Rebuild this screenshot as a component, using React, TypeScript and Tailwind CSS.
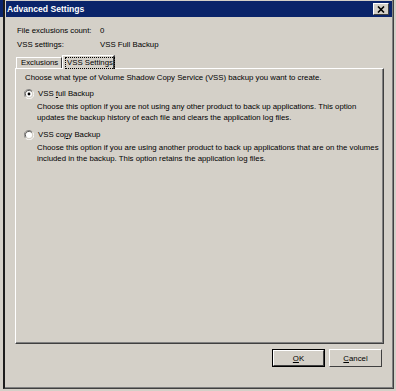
import React from "react";

const font = { fontFamily: '"Liberation Sans", Arial, sans-serif' };

function Radio({ checked }: { checked?: boolean }) {
  return (
    <svg width="10" height="10" viewBox="0 0 12 12" className="shrink-0">
      <path d="M10 2.5 A5 5 0 0 0 1.5 9.5" fill="none" stroke="#808080" strokeWidth="1" />
      <path d="M9.2 3.2 A4 4 0 0 0 2.6 8.6" fill="none" stroke="#404040" strokeWidth="1" />
      <path d="M2 9.8 A5 5 0 0 0 10.4 2.6" fill="none" stroke="#ffffff" strokeWidth="1" />
      <circle cx="6" cy="6" r="3.6" fill="#ffffff" />
      {checked ? <circle cx="6" cy="6" r="1.7" fill="#000000" /> : null}
    </svg>
  );
}

function Option({
  label,
  accel,
  rest,
  lines,
  checked,
}: {
  label: string;
  accel: string;
  rest: string;
  lines: string[];
  checked?: boolean;
}) {
  return (
    <div className="flex flex-col">
      <div className="flex items-center gap-[4px] pl-[8px] h-[12px]">
        <Radio checked={checked} />
        <span className="leading-[12px]">
          {label}
          <span className="underline">{accel}</span>
          {rest}
        </span>
      </div>
      <div className="pl-[21px] pt-[1px] leading-[11px] whitespace-nowrap">
        {lines.map((l) => (
          <div key={l}>{l}</div>
        ))}
      </div>
    </div>
  );
}

function Button({ children, isDefault }: { children: React.ReactNode; isDefault?: boolean }) {
  return (
    <div className={"w-[53px] h-[18px] " + (isDefault ? "border border-black" : "")}>
      <div className="w-full h-full border-t border-l border-white border-r border-b border-r-[#404040] border-b-[#404040] flex items-center justify-center leading-[11px]">
        {children}
      </div>
    </div>
  );
}

export default function App() {
  return (
    <div className="w-[396px] h-[391px] bg-[#d4d0c8] flex text-[7.8px] text-black overflow-hidden" style={font}>
      <div className="w-[3px] flex flex-col">
        <div className="h-[17px] bg-[#0a246a]" />
      </div>
      <div className="w-[391px] h-[389px] border-l-2 border-l-[#1c1c1c] border-r border-r-[#404040] border-b border-b-[#404040]">
        <div className="h-full border-r border-r-[#808080] border-b border-b-[#808080] pt-[1px] pl-[1px] flex flex-col">
          <div className="h-[16px] bg-[#0a246a] flex items-center justify-between pl-[1px] pr-[3px]">
            <span className="text-white font-bold text-[8.6px] leading-[16px]">Advanced Settings</span>
            <div className="w-[16px] h-[12px] bg-[#d4d0c8] border-t border-l border-white border-r border-b border-r-[#404040] border-b-[#404040] flex items-center justify-center">
              <svg width="8" height="7" viewBox="0 0 8 7">
                <path d="M1 0.5 L7 6.5 M7 0.5 L1 6.5" stroke="#000" strokeWidth="1.6" />
              </svg>
            </div>
          </div>

          <div className="pl-[11px] pt-[7px] flex flex-col leading-[13px]">
            <div className="flex">
              <span className="w-[83px]">File exclusions count:</span>
              <span>0</span>
            </div>
            <div className="flex pt-[1px]">
              <span className="w-[83px]">VSS settings:</span>
              <span>VSS Full Backup</span>
            </div>
          </div>

          <div className="pl-[9px] pt-[3px] flex items-end h-[17px] whitespace-nowrap">
            <div className="h-[11px] w-[46px] ml-[1px] border-t border-l border-white border-r border-r-[#404040] flex items-center pl-[4px] leading-[10px]">
              Exclusions
            </div>
            <div className="h-[14px] w-[53px] -mb-[1px] relative z-10 bg-[#d4d0c8] border-t border-l border-white border-r-2 border-r-[#404040] flex items-start pt-[1px] pl-[2px]">
              <span className="border border-dotted border-black px-[1px] leading-[10px]">VSS Settings</span>
            </div>
          </div>

          <div className="ml-[9px] w-[369px] h-[276px] border-t border-l border-white border-r border-b border-r-[#404040] border-b-[#404040]">
            <div className="h-full border-r border-b border-r-[#808080] border-b-[#808080] pl-[9px] pt-[3px] flex flex-col">
              <div className="leading-[11px] pb-[5px] whitespace-nowrap">
                Choose what type of Volume Shadow Copy Service (VSS) backup you want to create.
              </div>
              <div className="-ml-[9px]">
                <Option
                  checked
                  label="VSS "
                  accel="f"
                  rest="ull Backup"
                  lines={[
                    "Choose this option if you are not using any other product to back up applications. This option",
                    "updates the backup history of each file and clears the application log files.",
                  ]}
                />
                <div className="h-[6px]" />
                <Option
                  label="VSS co"
                  accel="p"
                  rest="y Backup"
                  lines={[
                    "Choose this option if you are using another product to back up applications that are on the volumes",
                    "included in the backup. This option retains the application log files.",
                  ]}
                />
              </div>
            </div>
          </div>

          <div className="flex justify-end gap-[4px] pr-[10px] pt-[5px]">
            <Button isDefault>
              <span>
                <span className="underline">O</span>K
              </span>
            </Button>
            <Button>
              <span>
                <span className="underline">C</span>ancel
              </span>
            </Button>
          </div>
        </div>
      </div>
    </div>
  );
}
